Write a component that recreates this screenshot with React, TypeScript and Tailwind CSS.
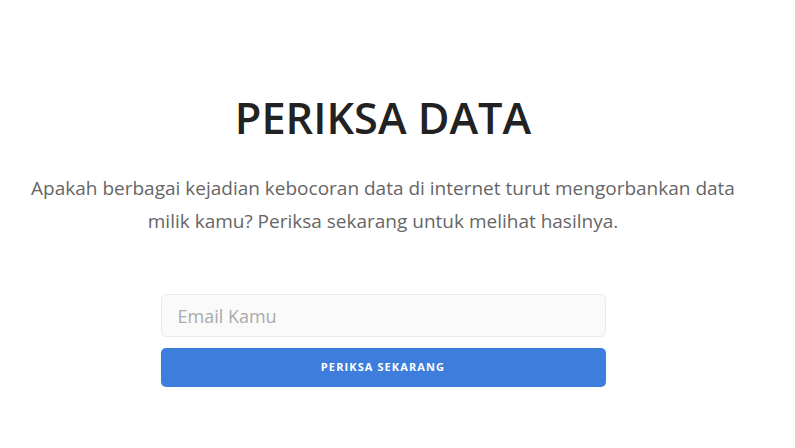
export default function App() {
  return (
    <div className="min-h-screen bg-white font-['Open_Sans',sans-serif]">
      <div className="flex w-[766px] flex-col items-center pt-[88px]">
        <h1 className="text-[43.3px] leading-[60px] font-semibold text-[#222]">PERIKSA DATA</h1>
        <p className="mt-[24px] max-w-[730px] text-center text-[19px] leading-[33px] text-[#666]">
          Apakah berbagai kejadian kebocoran data di internet turut mengorbankan data milik kamu? Periksa sekarang untuk melihat hasilnya.
        </p>
        <form className="mt-[56px] flex w-[445px] flex-col gap-[11px]" onSubmit={(e) => e.preventDefault()}>
          <input
            type="email"
            placeholder="Email Kamu"
            className="h-[43px] w-full rounded-[5px] border border-[#eaeaea] bg-[#fafafa] px-[16px] text-[18px] text-[#444] placeholder:text-[#aaa] outline-none"
          />
          <button
            type="submit"
            className="h-[39px] w-full rounded-[5px] bg-[#3d7ddb] text-[11px] font-bold tracking-[0.1em] text-white"
          >
            PERIKSA SEKARANG
          </button>
        </form>
      </div>
    </div>
  )
}
